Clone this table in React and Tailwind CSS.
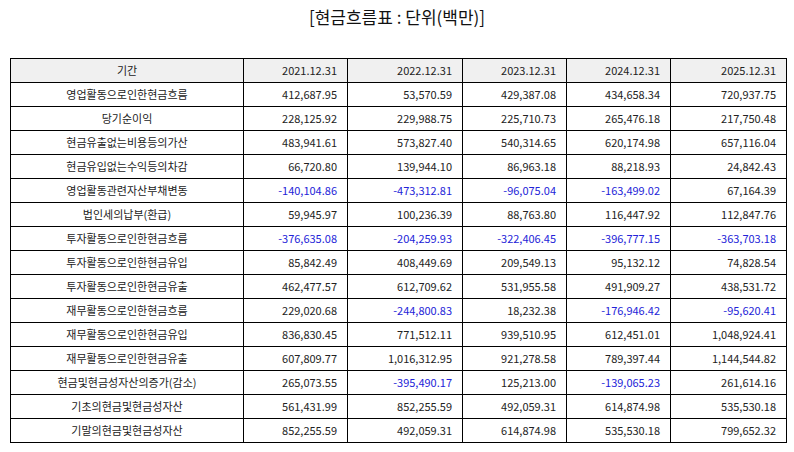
const cols = ['2021.12.31', '2022.12.31', '2023.12.31', '2024.12.31', '2025.12.31'];

const rows = [
  ['영업활동으로인한현금흐름', '412,687.95', '53,570.59', '429,387.08', '434,658.34', '720,937.75'],
  ['당기순이익', '228,125.92', '229,988.75', '225,710.73', '265,476.18', '217,750.48'],
  ['현금유출없는비용등의가산', '483,941.61', '573,827.40', '540,314.65', '620,174.98', '657,116.04'],
  ['현금유입없는수익등의차감', '66,720.80', '139,944.10', '86,963.18', '88,218.93', '24,842.43'],
  ['영업활동관련자산부채변동', '-140,104.86', '-473,312.81', '-96,075.04', '-163,499.02', '67,164.39'],
  ['법인세의납부(환급)', '59,945.97', '100,236.39', '88,763.80', '116,447.92', '112,847.76'],
  ['투자활동으로인한현금흐름', '-376,635.08', '-204,259.93', '-322,406.45', '-396,777.15', '-363,703.18'],
  ['투자활동으로인한현금유입', '85,842.49', '408,449.69', '209,549.13', '95,132.12', '74,828.54'],
  ['투자활동으로인한현금유출', '462,477.57', '612,709.62', '531,955.58', '491,909.27', '438,531.72'],
  ['재무활동으로인한현금흐름', '229,020.68', '-244,800.83', '18,232.38', '-176,946.42', '-95,620.41'],
  ['재무활동으로인한현금유입', '836,830.45', '771,512.11', '939,510.95', '612,451.01', '1,048,924.41'],
  ['재무활동으로인한현금유출', '607,809.77', '1,016,312.95', '921,278.58', '789,397.44', '1,144,544.82'],
  ['현금및현금성자산의증가(감소)', '265,073.55', '-395,490.17', '125,213.00', '-139,065.23', '261,614.16'],
  ['기초의현금및현금성자산', '561,431.99', '852,255.59', '492,059.31', '614,874.98', '535,530.18'],
  ['기말의현금및현금성자산', '852,255.59', '492,059.31', '614,874.98', '535,530.18', '799,652.32'],
];

const widths = ['w-[233px]', 'w-[104px]', 'w-[115px]', 'w-[104px]', 'w-[104px]', 'w-[116px]'];

export default function App() {
  return (
    <div className="w-[794px] h-[452px] bg-white font-['Noto_Sans_CJK_KR','Noto_Sans',sans-serif] text-[#222]">
      <div className="h-[34px] flex items-center justify-center text-[17px] text-[#111]">
        [현금흐름표 : 단위(백만)]
      </div>
      <div className="pt-[24px] pl-[10px]">
        <table className="border-collapse table-fixed w-[776px] text-[11px]">
          <colgroup>
            {widths.map((w, i) => (
              <col key={i} className={w} />
            ))}
          </colgroup>
          <thead>
            <tr className="h-[24px] bg-[#f0f0f0]">
              <th className="border-[1.5px] border-black font-normal text-center">기간</th>
              {cols.map((c) => (
                <th key={c} className="border-[1.5px] border-black font-normal text-right pr-[10px]">
                  {c}
                </th>
              ))}
            </tr>
          </thead>
          <tbody>
            {rows.map((r) => (
              <tr key={r[0]} className="h-[24px]">
                <td className="border-[1.5px] border-black text-center">{r[0]}</td>
                {r.slice(1).map((v, i) => (
                  <td
                    key={i}
                    className={`border-[1.5px] border-black text-right pr-[10px] ${v.startsWith('-') ? 'text-[#2323d8]' : ''}`}
                  >
                    {v}
                  </td>
                ))}
              </tr>
            ))}
          </tbody>
        </table>
      </div>
    </div>
  );
}
